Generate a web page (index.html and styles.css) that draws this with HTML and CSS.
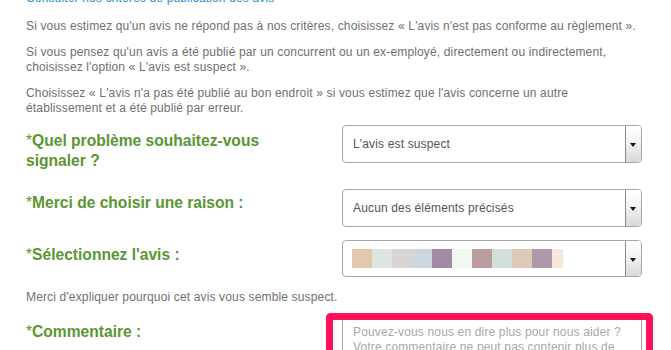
FILE: index.html
```html
<!DOCTYPE html>
<html lang="fr">
<head>
    <meta charset="UTF-8">
    <meta name="viewport" content="width=device-width, initial-scale=1.0">
    <title>Signaler un avis</title>
    <link rel="stylesheet" href="styles.css">
</head>
<body>
    <div class="container">
        <a class="criteria-link" href="#">Consulter nos critères de publication des avis</a>

        <p class="info">Si vous estimez qu'un avis ne répond pas à nos critères, choisissez « L'avis n'est pas conforme au règlement ».</p>
        <p class="info">Si vous pensez qu'un avis a été publié par un concurrent ou un ex-employé, directement ou indirectement, choisissez l'option « L'avis est suspect ».</p>
        <p class="info">Choisissez « L'avis n'a pas été publié au bon endroit » si vous estimez que l'avis concerne un autre établissement et a été publié par erreur.</p>

        <form class="report-form" onsubmit="return false;">
            <div class="row row-first">
                <label class="field-label"><span class="star">*</span>Quel problème souhaitez-vous signaler ?</label>
                <div class="select">
                    <span class="select-value">L'avis est suspect</span>
                    <span class="select-arrow"></span>
                </div>
            </div>

            <div class="row">
                <label class="field-label label-up"><span class="star">*</span>Merci de choisir une raison :</label>
                <div class="select">
                    <span class="select-value">Aucun des éléments précisés</span>
                    <span class="select-arrow"></span>
                </div>
            </div>

            <div class="row">
                <label class="field-label"><span class="star">*</span>Sélectionnez l'avis :</label>
                <div class="select select-review">
                    <span class="swatches">
                        <span class="swatch" style="background:#e0c8ad"></span>
                        <span class="swatch" style="background:#dde5de"></span>
                        <span class="swatch" style="background:#d9d4d6"></span>
                        <span class="swatch" style="background:#ccd8dd"></span>
                        <span class="swatch" style="background:#a28ba3"></span>
                        <span class="swatch" style="background:#f3f7f2"></span>
                        <span class="swatch" style="background:#bd9c9e"></span>
                        <span class="swatch" style="background:#d1e0d8"></span>
                        <span class="swatch" style="background:#ddcab6"></span>
                        <span class="swatch" style="background:#ae97ab"></span>
                        <span class="swatch swatch-end" style="background:#f5e9d7"></span>
                    </span>
                    <span class="select-arrow"></span>
                </div>
            </div>

            <p class="hint">Merci d'expliquer pourquoi cet avis vous semble suspect.</p>

            <div class="row">
                <label class="field-label label-comment"><span class="star">*</span>Commentaire :</label>
                <div class="focus-ring">
                    <textarea class="comment" placeholder="Pouvez-vous nous en dire plus pour nous aider ? Votre commentaire ne peut pas contenir plus de 1000 caractères."></textarea>
                </div>
            </div>
        </form>
    </div>
</body>
</html>
```

FILE: styles.css
```css
body {
    margin: 0;
    font-family: "Liberation Sans", Arial, sans-serif;
    background: #fff;
    overflow: hidden;
}

.container {
    padding: 0 0 0 26px;
    width: 640px;
}

.criteria-link {
    display: block;
    margin-top: -9px;
    font-size: 12px;
    line-height: 15px;
    letter-spacing: 0.15px;
    color: #2a8fd0;
    text-decoration: none;
}

.info {
    width: 615px;
    margin: 13px 0 0;
    font-size: 12px;
    line-height: 15px;
    letter-spacing: 0.15px;
    color: #707070;
}

.info + .info {
    margin-top: 11px;
}

.report-form {
    margin-top: 9px;
}

.row {
    display: flex;
    align-items: flex-start;
    margin-bottom: 13px;
}

.field-label {
    width: 316px;
    padding: 5px 40px 5px 0;
    font-size: 15.6px;
    line-height: 20px;
    font-weight: bold;
    color: #5a9632;
    box-sizing: border-box;
}

.row-first .field-label {
    padding-top: 6px;
}

.label-up {
    padding-top: 4px;
}

.star {
    font-weight: normal;
}

.select {
    display: flex;
    align-items: center;
    width: 300px;
    height: 38px;
    box-sizing: border-box;
    border: 1px solid #a6a6a6;
    border-radius: 4px;
    overflow: hidden;
    background: #fff;
}

.select-review {
    height: 37px;
}

.select-value {
    flex: 1;
    padding-left: 10px;
    font-size: 12px;
    letter-spacing: 0.15px;
    color: #555;
}

.select-arrow {
    align-self: stretch;
    width: 15px;
    border-left: 1px solid #8a8a8a;
    background: linear-gradient(#ffffff, #f4f4f4 45%, #d8d8d8);
    position: relative;
}

.select-arrow::after {
    content: "";
    position: absolute;
    left: 4px;
    top: 50%;
    margin-top: -1px;
    border-left: 3.5px solid transparent;
    border-right: 3.5px solid transparent;
    border-top: 4px solid #111;
}

.swatches {
    flex: 1;
    display: flex;
    padding-left: 9px;
}

.swatch {
    width: 20px;
    height: 19px;
}

.swatch-end {
    width: 11px;
}

.hint {
    margin: 0 0 8px;
    font-size: 12px;
    line-height: 15px;
    letter-spacing: 0.15px;
    color: #707070;
}

.label-comment {
    padding-top: 9px;
    width: 300px;
}

.focus-ring {
    width: 327px;
    box-sizing: border-box;
    border: 7px solid #ff1058;
    border-bottom: none;
    border-radius: 5px 5px 0 0;
    padding: 0 4px 0 9px;
    height: 60px;
}

.comment {
    display: block;
    width: 300px;
    height: 80px;
    box-sizing: border-box;
    border: 1px solid #a6a6a6;
    border-top: none;
    padding: 5px 10px;
    font-family: "Liberation Sans", Arial, sans-serif;
    font-size: 12px;
    line-height: 15px;
    letter-spacing: 0.15px;
    color: #555;
    resize: none;
    outline: none;
}

.comment::placeholder {
    color: #a8a8a8;
}
```
